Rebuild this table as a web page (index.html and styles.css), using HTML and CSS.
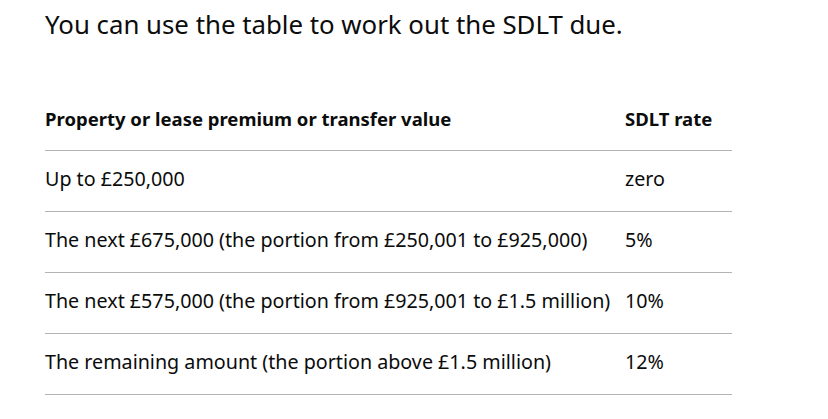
FILE: index.html
```html
<!DOCTYPE html>
<html lang="en">
<head>
<meta charset="utf-8">
<title>SDLT rates</title>
<link rel="stylesheet" href="styles.css">
</head>
<body>
<main class="content">
  <p class="lead">You can use the table to work out the SDLT due.</p>
  <table class="rates">
    <colgroup><col class="col-band"><col class="col-rate"></colgroup>
    <thead>
      <tr><th>Property or lease premium or transfer value</th><th>SDLT rate</th></tr>
    </thead>
    <tbody>
      <tr><td>Up to £250,000</td><td>zero</td></tr>
      <tr><td>The next £675,000 (the portion from £250,001 to £925,000)</td><td>5%</td></tr>
      <tr><td>The next £575,000 (the portion from £925,001 to £1.5 million)</td><td>10%</td></tr>
      <tr><td>The remaining amount (the portion above £1.5 million)</td><td>12%</td></tr>
    </tbody>
  </table>
</main>
</body>
</html>
```

FILE: styles.css
```css
html, body {
  margin: 0;
  padding: 0;
  background: #ffffff;
}
body {
  font-family: "Noto Sans", "Liberation Sans", sans-serif;
  color: #0b0c0c;
}
.content {
  padding: 0 45px;
}
.lead {
  margin: 0;
  padding-top: 4px;
  font-size: 25.8px;
  line-height: 40px;
}
.rates {
  margin-top: 46px;
  border-collapse: collapse;
  table-layout: fixed;
  width: 687px;
  font-size: 19.7px;
}
.col-band { width: 580px; }
.col-rate { width: 107px; }
.rates th, .rates td {
  text-align: left;
  padding: 16px 20px 20px 0;
  line-height: 24px;
  white-space: nowrap;
  border-bottom: 1px solid #b1b4b6;
}
.rates th {
  font-weight: 700;
  font-size: 18.5px;
}
.rates thead th {
  padding-top: 17px;
  padding-bottom: 19px;
}
```
